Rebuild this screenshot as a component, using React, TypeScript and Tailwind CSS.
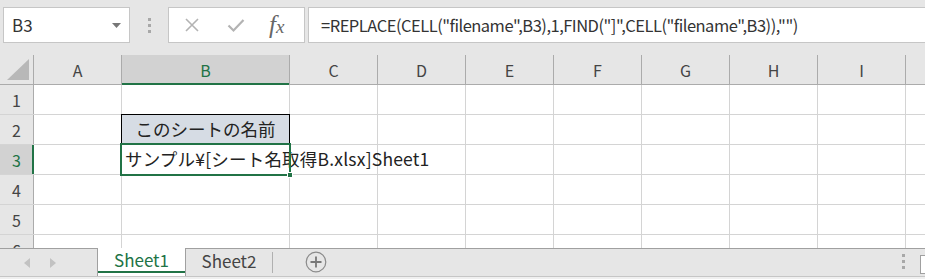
import React from "react";

const COLS = ["A", "B", "C", "D", "E", "F", "G", "H", "I", "J"];
const WIDTHS: Record<string, string> = {
  A: "w-[88px]",
  B: "w-[168px]",
  C: "w-[88px]",
  D: "w-[88px]",
  E: "w-[88px]",
  F: "w-[88px]",
  G: "w-[88px]",
  H: "w-[88px]",
  I: "w-[88px]",
  J: "w-[88px]",
};
const ROWS = [1, 2, 3, 4, 5, 6];

const font = "font-['Noto_Sans_CJK_JP','Noto_Sans',sans-serif]";

function Toolbar() {
  return (
    <div className="flex h-[55px] items-start bg-[#e6e6e6] pt-[7px]">
      {/* name box */}
      <div className="ml-[3px] flex h-[36px] w-[127px] shrink-0 items-center justify-between border border-[#c6c6c6] bg-white pl-[8px] pr-[8px]">
        <span className="text-[17px] text-[#333]">B3</span>
        <svg width="9" height="5" viewBox="0 0 9 5">
          <path d="M0 0h9L4.5 5z" fill="#777" />
        </svg>
      </div>
      {/* grip dots */}
      <div className="flex w-[38px] shrink-0 flex-col items-center gap-[3px] pt-[11px]">
        <span className="h-[3px] w-[3px] bg-[#a8a8a8]" />
        <span className="h-[3px] w-[3px] bg-[#a8a8a8]" />
        <span className="h-[3px] w-[3px] bg-[#a8a8a8]" />
      </div>
      {/* cancel / enter / fx */}
      <div className="flex h-[36px] w-[137px] shrink-0 items-center border border-[#c6c6c6] bg-white">
        <svg className="ml-[15px]" width="16" height="16" viewBox="0 0 16 16">
          <path d="M2 2l12 12M14 2L2 14" stroke="#b3b3b3" strokeWidth="1.6" />
        </svg>
        <svg className="ml-[27px]" width="18" height="16" viewBox="0 0 18 16">
          <path d="M1.5 8.5l5 5L16.5 3" stroke="#b3b3b3" strokeWidth="2.2" fill="none" />
        </svg>
        <span className="ml-[24px] pb-[2px] font-['Liberation_Serif',serif] text-[25px] italic leading-none text-[#666]">
          <span>f</span>
          <span className="text-[19px]">x</span>
        </span>
      </div>
      {/* formula */}
      <div className="ml-[3px] flex h-[36px] grow items-center border border-r-0 border-[#c6c6c6] bg-white pl-[12px]">
        <span className="whitespace-nowrap text-[16.5px] tracking-[-0.5px] text-[#333]">
          =REPLACE(CELL("filename",B3),1,FIND("]",CELL("filename",B3)),"")
        </span>
      </div>
    </div>
  );
}

function HeaderRow() {
  return (
    <div className="flex h-[30px] border-b border-[#ababab] bg-[#e6e6e6]">
      <div className="relative w-[34px] shrink-0 border-r border-[#ababab]">
        <svg className="absolute bottom-[4px] right-[4px]" width="22" height="21" viewBox="0 0 22 21">
          <path d="M22 0v21H0z" fill="#b8b8b8" />
        </svg>
      </div>
      {COLS.map((c) => {
        const sel = c === "B";
        return (
          <div
            key={c}
            className={`${WIDTHS[c]} relative flex shrink-0 items-center justify-center border-r border-[#ababab] text-[16px] ${
              sel ? "bg-[#d2d2d2] text-[#217346]" : "text-[#444]"
            }`}
          >
            {c !== "J" && c}
            {sel && <span className="absolute bottom-[-1px] left-0 right-0 h-[2px] bg-[#217346]" />}
          </div>
        );
      })}
    </div>
  );
}

function Row({ n }: { n: number }) {
  const sel = n === 3;
  return (
    <div className="flex h-[30px] border-b border-[#d4d4d4]">
      <div
        className={`relative flex w-[34px] shrink-0 items-center justify-center border-r border-[#ababab] text-[16px] ${
          sel ? "bg-[#d2d2d2] text-[#217346]" : "bg-[#e6e6e6] text-[#444]"
        }`}
      >
        {n}
        {sel && <span className="absolute right-[-1px] top-0 bottom-0 w-[2px] bg-[#217346]" />}
      </div>
      {COLS.map((c) => {
        const isB2 = n === 2 && c === "B";
        const isB3 = n === 3 && c === "B";
        return (
          <div
            key={c}
            className={`${WIDTHS[c]} relative shrink-0 border-r border-[#d4d4d4] ${isB2 ? "bg-[#d6dce4]" : "bg-white"}`}
          >
            {isB2 && (
              <div className="absolute -left-px -top-px bottom-[-1px] right-[-1px] flex items-center justify-center border border-black text-[17.5px] text-[#222]">
                このシートの名前
              </div>
            )}
            {isB3 && (
              <>
                <div className="absolute left-[3px] top-0 bottom-0 z-10 flex items-center whitespace-nowrap text-[17.5px] tracking-[0.2px] text-[#222]">
                  サンプル¥[シート名取得B.xlsx]Sheet1
                </div>
                <div className="absolute -left-[2px] -top-[2px] bottom-[-2px] right-[-2px] z-20 border-2 border-[#217346]" />
                <div className="absolute bottom-[-4px] right-[-4px] z-30 h-[6px] w-[6px] border border-white bg-[#217346]" />
              </>
            )}
          </div>
        );
      })}
    </div>
  );
}

function TabBar() {
  return (
    <div className="flex h-[29px] items-stretch border-t border-[#a0a0a0] border-b border-b-[#c6c6c6] bg-[#e6e6e6]">
      <div className="flex w-[97px] shrink-0 items-center gap-[20px] pl-[24px]">
        <svg width="6" height="10" viewBox="0 0 6 10">
          <path d="M6 0v10L0 5z" fill="#c2c2c2" />
        </svg>
        <svg width="6" height="10" viewBox="0 0 6 10">
          <path d="M0 0v10l6-5z" fill="#c2c2c2" />
        </svg>
      </div>
      <div className="relative mt-[-1px] flex w-[89px] shrink-0 items-center justify-center border-x border-[#a0a0a0] bg-white pb-[4px] text-[17px] text-[#217346]">
        Sheet1
        <span className="absolute bottom-[3px] left-0 right-0 h-[2px] bg-[#217346]" />
      </div>
      <div className="flex w-[86px] shrink-0 items-center justify-center pb-[4px] text-[17px] text-[#444]">
        Sheet2
      </div>
      <div className="my-[3px] w-px bg-[#b0b0b0]" />
      <div className="flex items-center pl-[32px] pb-[2px]">
        <svg width="22" height="22" viewBox="0 0 22 22">
          <circle cx="11" cy="11" r="9.8" fill="none" stroke="#8a8a8a" strokeWidth="1.2" />
          <path d="M11 5.5v11M5.5 11h11" stroke="#777" strokeWidth="1.8" />
        </svg>
      </div>
      <div className="grow" />
      <div className="flex flex-col justify-center gap-[3px] pb-[2px] pr-[15px]">
        <span className="h-[3px] w-[3px] bg-[#a8a8a8]" />
        <span className="h-[3px] w-[3px] bg-[#a8a8a8]" />
        <span className="h-[3px] w-[3px] bg-[#a8a8a8]" />
      </div>
      <div className="mt-[6px] mb-[2px] w-[5px] border-l border-t border-b border-[#a0a0a0] bg-white" />
    </div>
  );
}

export default function App() {
  return (
    <div className={`h-[279px] w-[925px] overflow-hidden bg-[#f0f0f0] ${font}`}>
      <Toolbar />
      <div className="h-[193px] overflow-hidden">
        <HeaderRow />
        {ROWS.map((n) => (
          <Row key={n} n={n} />
        ))}
      </div>
      <TabBar />
    </div>
  );
}
